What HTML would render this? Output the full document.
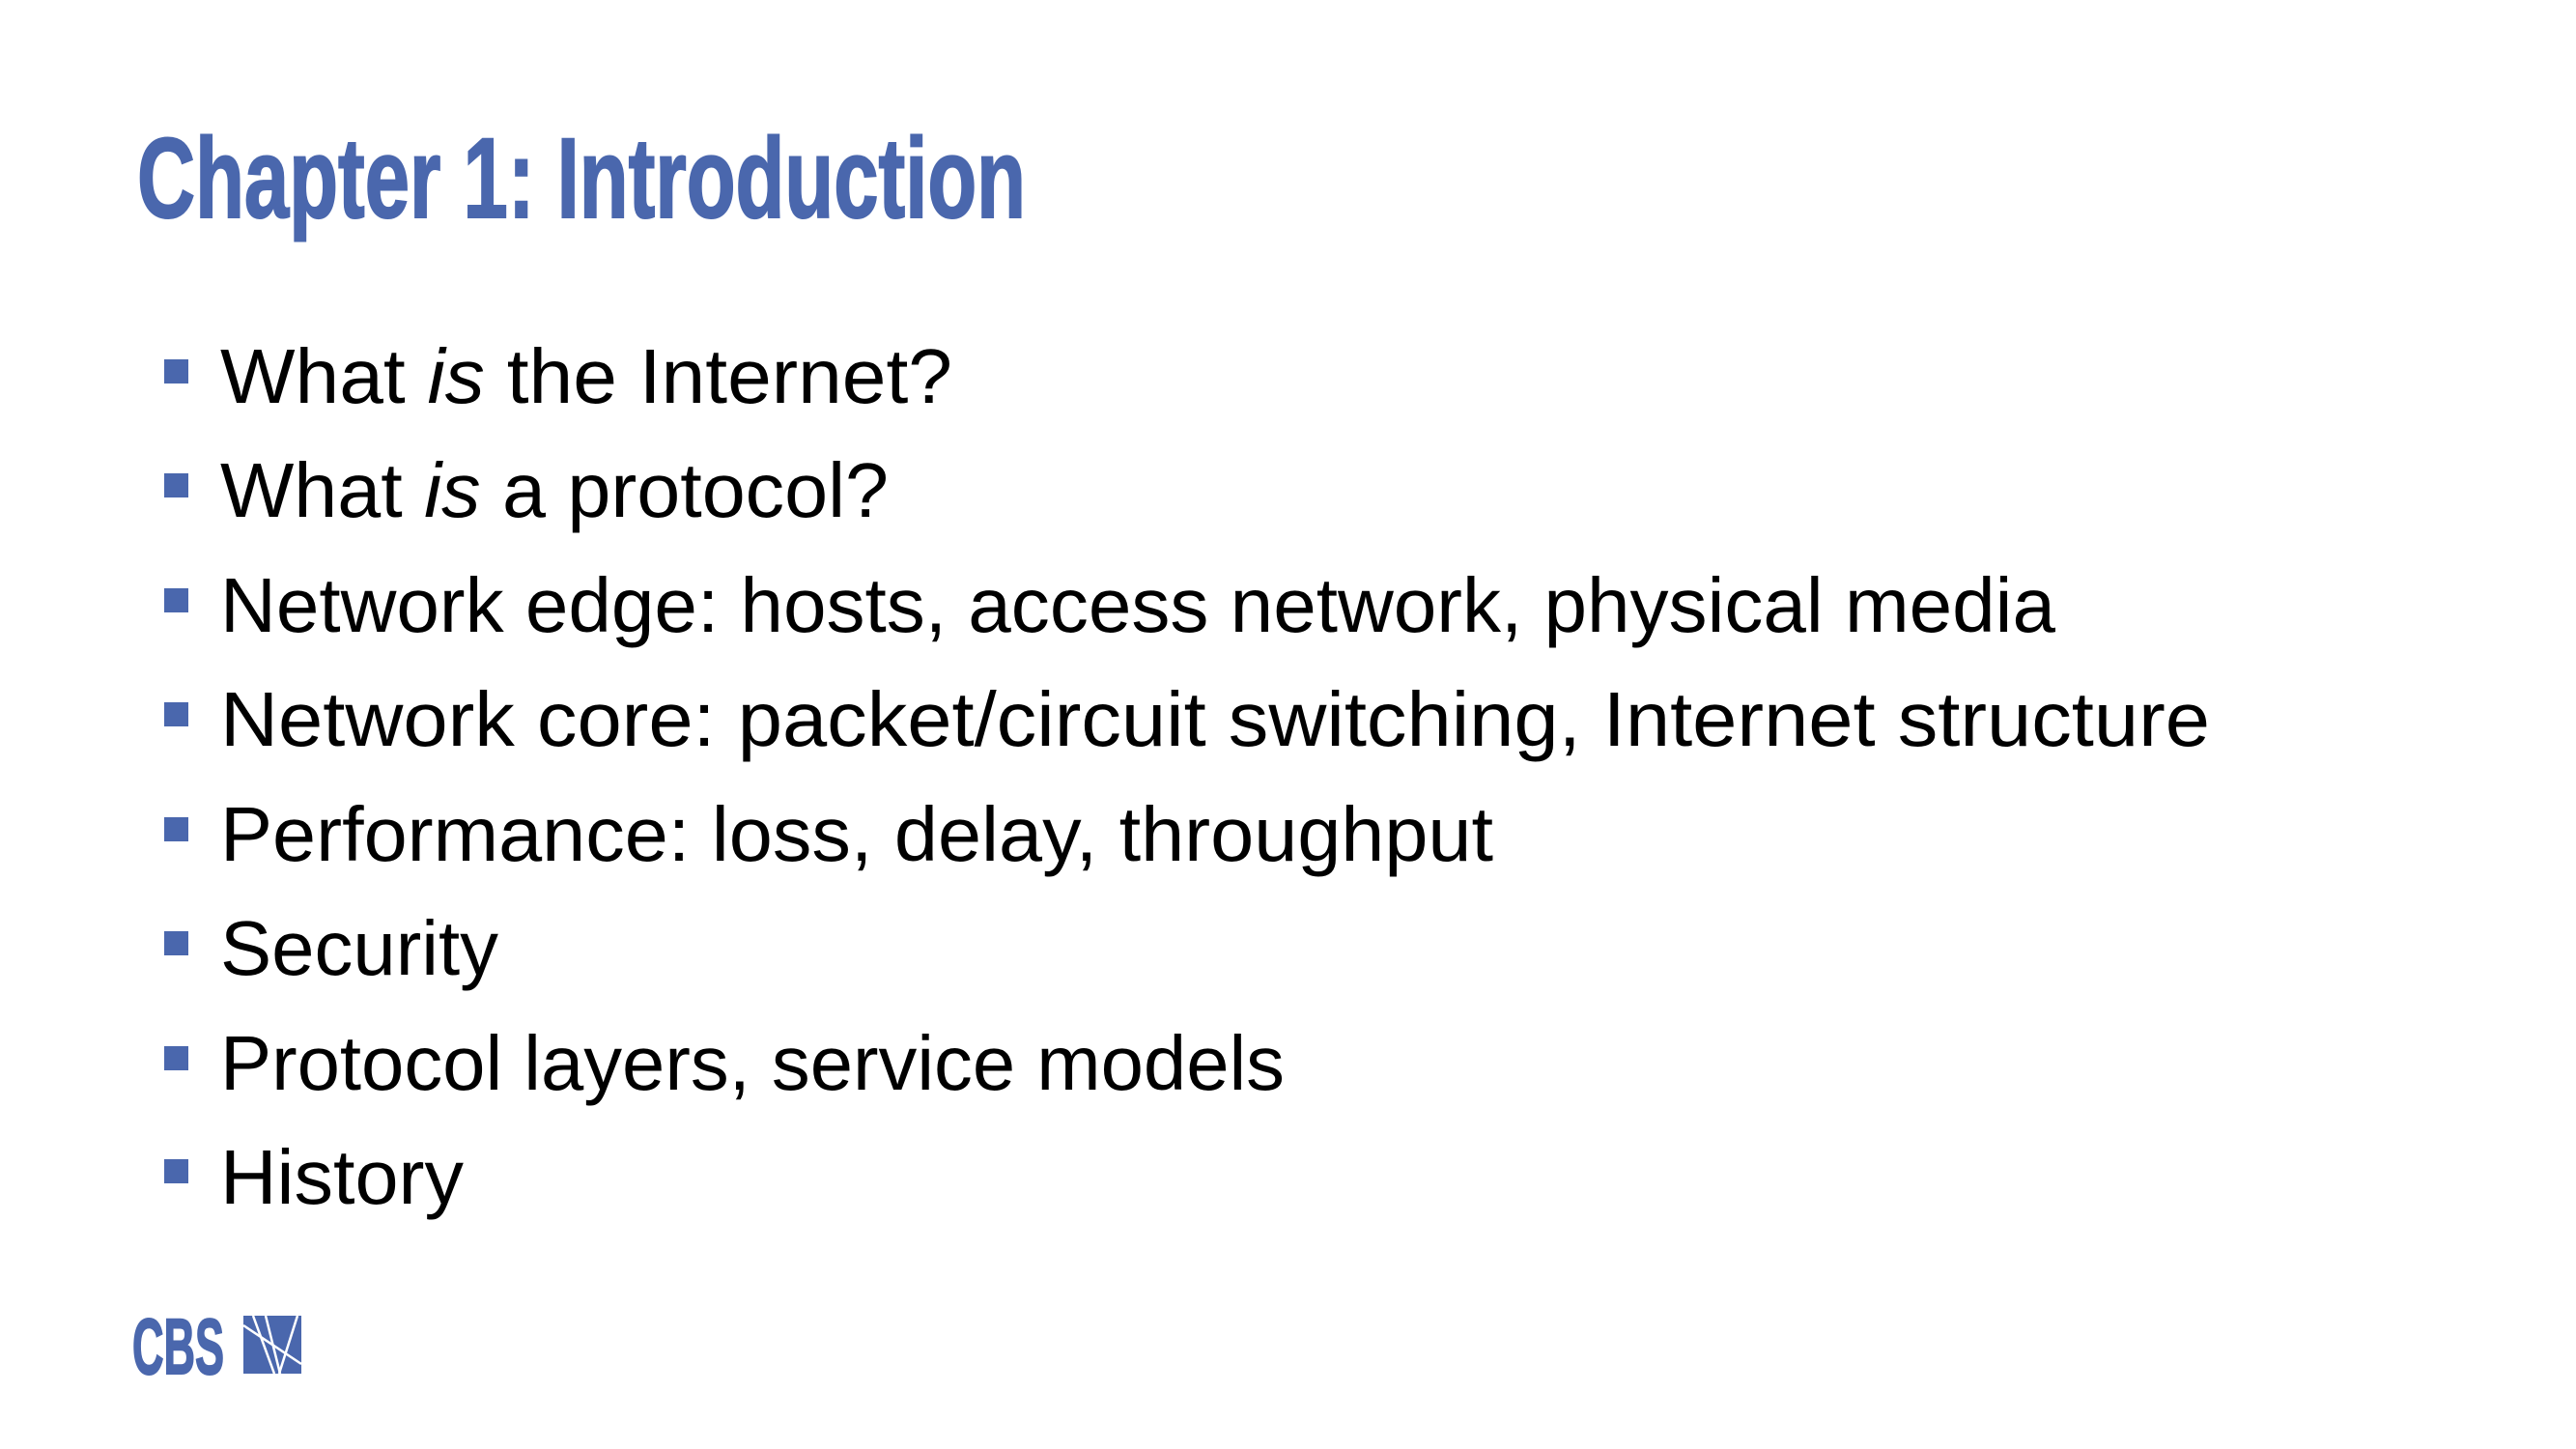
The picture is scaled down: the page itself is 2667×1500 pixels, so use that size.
<!DOCTYPE html>
<html><head><meta charset="utf-8"><style>
html,body{margin:0;padding:0;background:#fff;}
svg{display:block;}
</style></head><body>
<svg width="2667" height="1500" viewBox="0 0 2667 1500" xmlns="http://www.w3.org/2000/svg">
<rect width="2667" height="1500" fill="#fff"/>
<text x="142" y="225" font-family="Liberation Sans Narrow, Liberation Sans, sans-serif" font-weight="bold" font-size="118" fill="#4a67ad" stroke="#4a67ad" stroke-width="2" textLength="920" lengthAdjust="spacingAndGlyphs">Chapter 1: Introduction</text>
<g fill="#4a67ad">
<rect x="170" y="372" width="25" height="25"/>
<rect x="170" y="490" width="25" height="25"/>
<rect x="170" y="609" width="25" height="25"/>
<rect x="170" y="727" width="25" height="25"/>
<rect x="170" y="846" width="25" height="25"/>
<rect x="170" y="964" width="25" height="25"/>
<rect x="170" y="1083" width="25" height="25"/>
<rect x="170" y="1200" width="25" height="25"/>
</g>
<g font-family="Liberation Sans, sans-serif" font-size="80" fill="#000">
<text x="228" y="417" textLength="758" lengthAdjust="spacingAndGlyphs">What <tspan font-style="italic">is</tspan> the Internet?</text>
<text x="228" y="535" textLength="692" lengthAdjust="spacingAndGlyphs">What <tspan font-style="italic">is</tspan> a protocol?</text>
<text x="228" y="654" textLength="1900" lengthAdjust="spacingAndGlyphs">Network edge: hosts, access network, physical media</text>
<text x="228" y="772" textLength="2060" lengthAdjust="spacingAndGlyphs">Network core: packet/circuit switching, Internet structure</text>
<text x="228" y="891" textLength="1318" lengthAdjust="spacingAndGlyphs">Performance: loss, delay, throughput</text>
<text x="228" y="1009" textLength="288" lengthAdjust="spacingAndGlyphs">Security</text>
<text x="228" y="1128" textLength="1102" lengthAdjust="spacingAndGlyphs">Protocol layers, service models</text>
<text x="228" y="1246" textLength="252" lengthAdjust="spacingAndGlyphs">History</text>
</g>
<text x="137" y="1422" font-family="Liberation Sans Narrow, Liberation Sans, sans-serif" font-weight="bold" font-size="82" fill="#4a67ad" stroke="#4a67ad" stroke-width="2" textLength="95" lengthAdjust="spacingAndGlyphs">CBS</text>
<rect x="252" y="1362" width="60" height="60" fill="#4a67ad"/>
<g stroke="#fff" stroke-width="2.5" fill="none">
<path d="M252 1372 L312 1412"/>
<path d="M262 1362 L284 1422"/>
<path d="M275 1362 L290 1422"/>
<path d="M308 1362 L289 1422"/>
</g>
</svg>
</body></html>
